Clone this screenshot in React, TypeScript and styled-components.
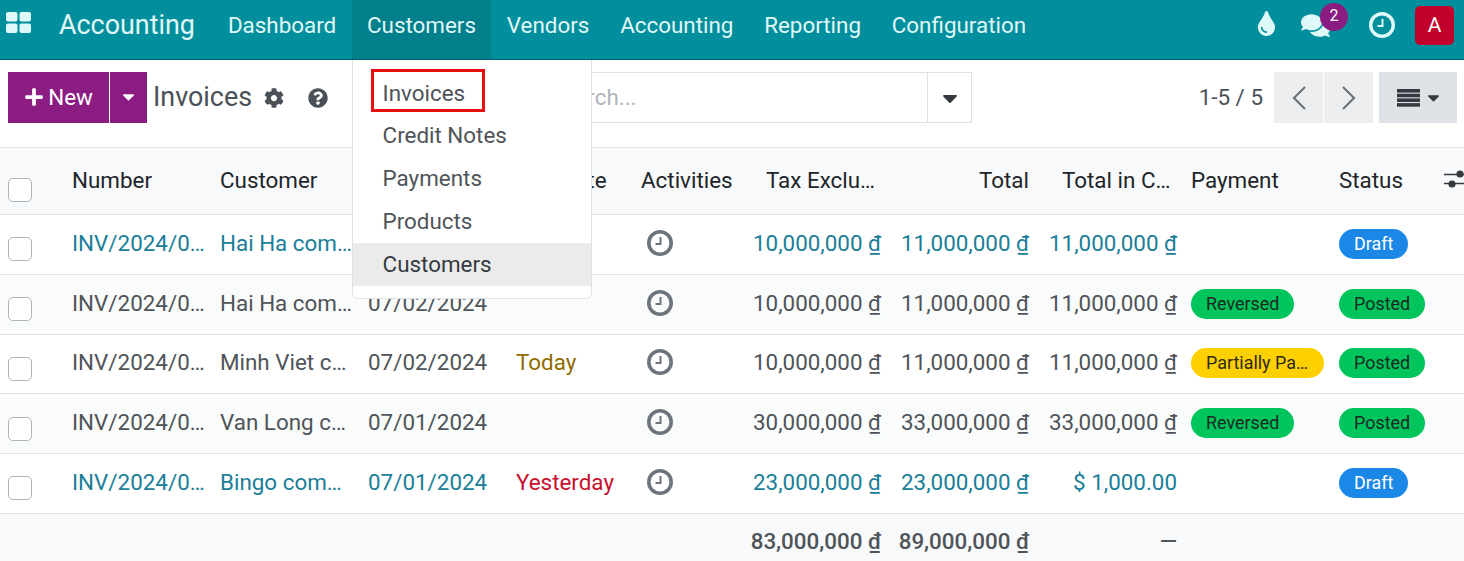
import React from "react";
import styled, { createGlobalStyle } from "styled-components";
import { FaCaretDown, FaCog, FaComments, FaPlus, FaQuestionCircle, FaTint } from "react-icons/fa";

const Global = createGlobalStyle`
  html, body { margin: 0; height: 561px; overflow: hidden; background: #fff; }
  body { font-family: Roboto, "Liberation Sans", sans-serif; font-size: 22.4px; color: #495057; }
  * { box-sizing: border-box; }
`;

const Page = styled.div`
  position: relative;
  width: 1464px;
  height: 561px;
  overflow: hidden;
`;

const NavBar = styled.header`
  display: flex;
  align-items: stretch;
  height: 60px;
  background: #018f9d;
  border-bottom: 1px solid #01606a;
  color: #e0f7f7;
`;

const AppsButton = styled.div`
  width: 38px;
  padding: 12px 0 0 6px;
  color: #dff8f8;
`;

const Brand = styled.div`
  display: flex;
  align-items: center;
  margin: 0 17.6px 0 21px;
  padding-bottom: 10px;
  font-size: 26.88px;
`;

const NavItem = styled.div<{ $active?: boolean }>`
  display: flex;
  align-items: center;
  padding: 0 15.4px 10px;
  background: ${(p) => (p.$active ? "#017f8b" : "transparent")};
`;

const NavRight = styled.div`
  display: flex;
  align-items: center;
  margin-left: auto;
  padding: 0 10px 9px 0;
`;

const NavIcon = styled.div<{ $w: number; $mr?: number; $up?: number }>`
  position: relative;
  display: flex;
  justify-content: center;
  width: ${(p) => p.$w}px;
  margin-right: ${(p) => p.$mr || 0}px;
  margin-top: ${(p) => -(p.$up || 0)}px;
  color: #dff8f8;
`;

const CountBadge = styled.span`
  position: absolute;
  top: -8px;
  right: -3px;
  width: 28px;
  height: 28px;
  border-radius: 50%;
  background: #8a1c82;
  color: #fff;
  font-size: 16px;
  line-height: 25px;
  text-align: center;
`;

const Avatar = styled.div`
  width: 39px;
  height: 39px;
  margin-left: 10px;
  border-radius: 5px;
  background: #c1002c;
  color: #fff;
  font-size: 21px;
  line-height: 39px;
  text-align: center;
`;

const ControlPanel = styled.section`
  display: flex;
  align-items: flex-start;
  height: 88px;
  padding: 12px 7px 0 8px;
  border-bottom: 1px solid #dee2e6;
`;

const ActionGroup = styled.div`
  display: flex;
  align-items: center;
  width: 532px;
  height: 51px;
`;

const PrimaryButton = styled.div<{ $w: number }>`
  display: flex;
  align-items: center;
  justify-content: center;
  gap: 4px;
  width: ${(p) => p.$w}px;
  height: 51px;
  margin-right: 1px;
  padding-bottom: 2px;
  background: #8a1c82;
  color: #fff;
`;

const PageTitle = styled.div`
  margin-left: 5px;
  padding-bottom: 2px;
  font-size: 26.88px;
  color: #495057;
`;

const TitleIcon = styled.span<{ $ml: number }>`
  display: flex;
  margin-left: ${(p) => p.$ml}px;
  color: #495057;
`;

const SearchBox = styled.div`
  display: flex;
  align-items: stretch;
  width: 432px;
  height: 51px;
  border: 1px solid #dee2e6;
`;

const SearchInput = styled.div`
  flex: 1;
  padding-left: 9px;
  line-height: 49px;
  color: #adb5bd;
`;

const SearchCaret = styled.div`
  display: flex;
  align-items: center;
  justify-content: center;
  width: 44px;
  border-left: 1px solid #dee2e6;
  color: #343a40;
`;

const PagerGroup = styled.div`
  display: flex;
  align-items: center;
  margin-left: auto;
  height: 51px;
`;

const PagerText = styled.div`
  margin-right: 11px;
  padding-bottom: 2px;
  color: #495057;
`;

const PagerButton = styled.div`
  display: flex;
  align-items: center;
  justify-content: center;
  width: 49px;
  height: 51px;
  margin-right: 1px;
  background: #eceef0;
  color: #6c757d;
`;

const ViewButton = styled.div`
  display: flex;
  align-items: center;
  justify-content: center;
  gap: 4px;
  width: 78px;
  height: 51px;
  margin-left: 5px;
  padding-left: 4px;
  background: #dee1e5;
  color: #343a40;
`;

const Table = styled.table`
  width: 1464px;
  table-layout: fixed;
  border-collapse: collapse;
`;

const HeadRow = styled.tr`
  height: 66.6px;
  background: #f8f9fa;
  border-bottom: 1px solid #dee2e6;
  color: #212529;
`;

const HeadCell = styled.th<{ $right?: boolean; $tight?: boolean }>`
  padding: 0 8px 3px ${(p) => (p.$tight ? 6 : 8)}px;
  font-weight: 400;
  text-align: ${(p) => (p.$right ? "right" : "left")};
  white-space: nowrap;
  overflow: hidden;
`;

const HeadLabel = styled.span`
  display: inline-block;
  max-width: 115px;
  margin-top: -2px;
  text-align: left;
  vertical-align: middle;
  overflow: hidden;
  text-overflow: ellipsis;
`;

const Row = styled.tr<{ $odd: boolean; $link: boolean }>`
  height: 59.75px;
  background: ${(p) => (p.$odd ? "#fafbfb" : "#fff")};
  border-bottom: 1px solid #dee2e6;
  color: ${(p) => (p.$link ? "#1a7e99" : "#4f5459")};
`;

const Cell = styled.td<{ $right?: boolean; $tight?: boolean; $tone?: string; $wide?: boolean }>`
  padding: 0 ${(p) => (p.$wide ? 4 : 8)}px 3px ${(p) => (p.$tight ? 6 : 8)}px;
  text-align: ${(p) => (p.$right ? "right" : "left")};
  white-space: nowrap;
  overflow: hidden;
  text-overflow: ellipsis;
  color: ${(p) => p.$tone || "inherit"};
`;

const FootCell = styled.td`
  padding: 0 8px 5px 0;
  text-align: right;
  white-space: nowrap;
`;

const CheckBox = styled.span<{ $top: number }>`
  display: block;
  width: 24px;
  height: 24px;
  margin-top: ${(p) => p.$top}px;
  border: 1px solid #adb5bd;
  border-radius: 5px;
  background: #fff;
`;

const Badge = styled.span<{ $bg: string; $fg: string }>`
  display: inline-block;
  max-width: 133px;
  height: 30px;
  margin-top: 2px;
  padding: 0 15px;
  border-radius: 15px;
  line-height: 30px;
  font-size: 17.92px;
  vertical-align: middle;
  overflow: hidden;
  white-space: nowrap;
  text-overflow: ellipsis;
  background: ${(p) => p.$bg};
  color: ${(p) => p.$fg};
`;

const FootRow = styled.tr`
  height: 59.75px;
  background: #f8f9fa;
  font-weight: 500;
  color: #4f5459;
`;

const Dropdown = styled.nav`
  position: absolute;
  top: 60px;
  left: 352px;
  width: 240px;
  height: 239px;
  padding: 11px 0;
  background: #fff;
  border: 1px solid #dee2e6;
  border-top: 0;
  border-radius: 0 0 6px 6px;
`;

const MenuItem = styled.div<{ $hover?: boolean; $first?: boolean }>`
  position: relative;
  height: 43px;
  padding-left: 29.6px;
  padding-top: ${(p) => (p.$first ? 1 : 0)}px;
  line-height: 43px;
  color: ${(p) => (p.$hover ? "#343a40" : "#4f5459")};
  background: ${(p) => (p.$hover ? "#ebebeb" : "transparent")};
`;

const Highlight = styled.span`
  position: absolute;
  left: 18px;
  top: -2px;
  width: 114px;
  height: 43px;
  border: 3px solid #e80f12;
`;

const StatusHead = styled.span`
  display: flex;
  align-items: center;
  justify-content: space-between;
  width: 133px;
`;

const SlidersSlot = styled.span`
  display: block;
  margin-top: 4px;
`;

const ActivitySlot = styled.span`
  display: block;
  height: 26px;
  padding-left: 6px;
`;

const AppsIcon = () => (
  <svg width="26" height="21" viewBox="0 0 26 21" fill="currentColor">
    <rect x="0" y="0" width="11.5" height="9.5" rx="2" />
    <rect x="13.5" y="0" width="11.5" height="9.5" rx="2" />
    <rect x="0" y="11.5" width="11.5" height="9.5" rx="2" />
    <rect x="13.5" y="11.5" width="11.5" height="9.5" rx="2" />
  </svg>
);

const ClockIcon = ({ size, color, sw }: { size: number; color: string; sw: number }) => (
  <svg width={size} height={size} viewBox="0 0 26 26" fill="none" stroke={color}>
    <circle cx="13" cy="13" r={13 - sw / 2} strokeWidth={sw} />
    <path d="M13.5 7v7H8.5" strokeWidth="2" />
  </svg>
);

const Chevron = ({ left }: { left?: boolean }) => (
  <svg width="16" height="24" viewBox="0 0 16 24" fill="none" stroke="currentColor" strokeWidth="2.2">
    <path d={left ? "M14 1L3 12l11 11" : "M2 1l11 11L2 23"} />
  </svg>
);

const SlidersIcon = () => (
  <svg width="28" height="22" viewBox="0 0 28 22" fill="#343a40" stroke="#343a40">
    <path d="M0 6.5h28M0 15.5h28" strokeWidth="1.4" />
    <circle cx="16" cy="6" r="3.6" stroke="none" />
    <circle cx="8" cy="16" r="3.6" stroke="none" />
  </svg>
);

const ListIcon = () => (
  <svg width="23" height="18" viewBox="0 0 23 18" fill="currentColor">
    <rect y="0" width="23" height="3.6" />
    <rect y="4.7" width="23" height="3.6" />
    <rect y="9.4" width="23" height="3.6" />
    <rect y="14.1" width="23" height="3.6" />
  </svg>
);

type Status = "Draft" | "Posted";
type Pay = "Reversed" | "Partially Paid" | "";
interface Invoice {
  number: string; customer: string; date: string; due: string; dueTone?: string;
  tax: string; total: string; currency: string; pay: Pay; status: Status;
}

const D = "\u00a0₫";
const rows: Invoice[] = [
  { number: "INV/2024/00005", customer: "Hai Ha company", date: "", due: "", tax: "10,000,000" + D, total: "11,000,000" + D, currency: "11,000,000" + D, pay: "", status: "Draft" },
  { number: "INV/2024/00004", customer: "Hai Ha company", date: "07/02/2024", due: "", tax: "10,000,000" + D, total: "11,000,000" + D, currency: "11,000,000" + D, pay: "Reversed", status: "Posted" },
  { number: "INV/2024/00003", customer: "Minh Viet company", date: "07/02/2024", due: "Today", dueTone: "#8f6c00", tax: "10,000,000" + D, total: "11,000,000" + D, currency: "11,000,000" + D, pay: "Partially Paid", status: "Posted" },
  { number: "INV/2024/00002", customer: "Van Long company", date: "07/01/2024", due: "", tax: "30,000,000" + D, total: "33,000,000" + D, currency: "33,000,000" + D, pay: "Reversed", status: "Posted" },
  { number: "INV/2024/00001", customer: "Bingo company", date: "07/01/2024", due: "Yesterday", dueTone: "#c8102e", tax: "23,000,000" + D, total: "23,000,000" + D, currency: "$\u00a01,000.00", pay: "", status: "Draft" },
];

const widths = [64, 148, 148, 148, 125, 108, 148, 148, 148, 148, 131];

const payColors: Record<string, [string, string]> = {
  Reversed: ["#00c45c", "#1c2b22"],
  "Partially Paid": ["#ffd000", "#2b2a1c"],
};
const statusColors: Record<Status, [string, string]> = {
  Draft: ["#1b87e6", "#fff"],
  Posted: ["#00c45c", "#1c2b22"],
};

export default function App() {
  return (
    <Page>
      <Global />
      <NavBar>
        <AppsButton><AppsIcon /></AppsButton>
        <Brand>Accounting</Brand>
        <NavItem>Dashboard</NavItem>
        <NavItem $active>Customers</NavItem>
        <NavItem>Vendors</NavItem>
        <NavItem>Accounting</NavItem>
        <NavItem>Reporting</NavItem>
        <NavItem>Configuration</NavItem>
        <NavRight>
          <NavIcon $w={38} $up={4}><FaTint size={25} /></NavIcon>
          <NavIcon $w={60} $mr={14}><FaComments size={29} /><CountBadge>2</CountBadge></NavIcon>
          <NavIcon $w={46}><ClockIcon size={26} color="#dff8f8" sw={3.4} /></NavIcon>
          <Avatar>A</Avatar>
        </NavRight>
      </NavBar>
      <ControlPanel>
        <ActionGroup>
          <PrimaryButton $w={101}><FaPlus size={20} />New</PrimaryButton>
          <PrimaryButton $w={37}><FaCaretDown size={19} /></PrimaryButton>
          <PageTitle>Invoices</PageTitle>
          <TitleIcon $ml={12}><FaCog size={20} /></TitleIcon>
          <TitleIcon $ml={24}><FaQuestionCircle size={20} /></TitleIcon>
        </ActionGroup>
        <SearchBox>
          <SearchInput>Search...</SearchInput>
          <SearchCaret><FaCaretDown size={24} /></SearchCaret>
        </SearchBox>
        <PagerGroup>
          <PagerText>1-5 / 5</PagerText>
          <PagerButton><Chevron left /></PagerButton>
          <PagerButton><Chevron /></PagerButton>
          <ViewButton><ListIcon /><FaCaretDown size={19} /></ViewButton>
        </PagerGroup>
      </ControlPanel>
      <Table>
        <colgroup>
          {widths.map((w, i) => <col key={i} style={{ width: w }} />)}
        </colgroup>
        <thead>
          <HeadRow>
            <HeadCell><CheckBox $top={20} /></HeadCell>
            <HeadCell>Number</HeadCell>
            <HeadCell>Customer</HeadCell>
            <HeadCell>Invoice Date</HeadCell>
            <HeadCell>Due Date</HeadCell>
            <HeadCell>Activities</HeadCell>
            <HeadCell $right><HeadLabel>Tax Excluded</HeadLabel></HeadCell>
            <HeadCell $right>Total</HeadCell>
            <HeadCell $right><HeadLabel>Total in Currency</HeadLabel></HeadCell>
            <HeadCell $tight>Payment</HeadCell>
            <HeadCell $tight>
              <StatusHead>Status<SlidersSlot><SlidersIcon /></SlidersSlot></StatusHead>
            </HeadCell>
          </HeadRow>
        </thead>
        <tbody>
          {rows.map((r, i) => (
            <Row key={r.number} $odd={i % 2 === 1} $link={r.status === "Draft"}>
              <Cell><CheckBox $top={13} /></Cell>
              <Cell $wide>{r.number}</Cell>
              <Cell>{r.customer}</Cell>
              <Cell>{r.date}</Cell>
              <Cell $tone={r.dueTone}>{r.due}</Cell>
              <Cell><ActivitySlot><ClockIcon size={26} color="#6c757d" sw={3.6} /></ActivitySlot></Cell>
              <Cell $right>{r.tax}</Cell>
              <Cell $right>{r.total}</Cell>
              <Cell $right>{r.currency}</Cell>
              <Cell $tight>
                {r.pay && <Badge $bg={payColors[r.pay][0]} $fg={payColors[r.pay][1]}>{r.pay}</Badge>}
              </Cell>
              <Cell $tight>
                <Badge $bg={statusColors[r.status][0]} $fg={statusColors[r.status][1]}>{r.status}</Badge>
              </Cell>
            </Row>
          ))}
        </tbody>
        <tfoot>
          <FootRow>
            <FootCell colSpan={6} />
            <FootCell>83,000,000{D}</FootCell>
            <FootCell>89,000,000{D}</FootCell>
            <FootCell>—</FootCell>
            <FootCell colSpan={2} />
          </FootRow>
        </tfoot>
      </Table>
      <Dropdown>
        <MenuItem $first>Invoices<Highlight /></MenuItem>
        <MenuItem>Credit Notes</MenuItem>
        <MenuItem>Payments</MenuItem>
        <MenuItem>Products</MenuItem>
        <MenuItem $hover>Customers</MenuItem>
      </Dropdown>
    </Page>
  );
}
